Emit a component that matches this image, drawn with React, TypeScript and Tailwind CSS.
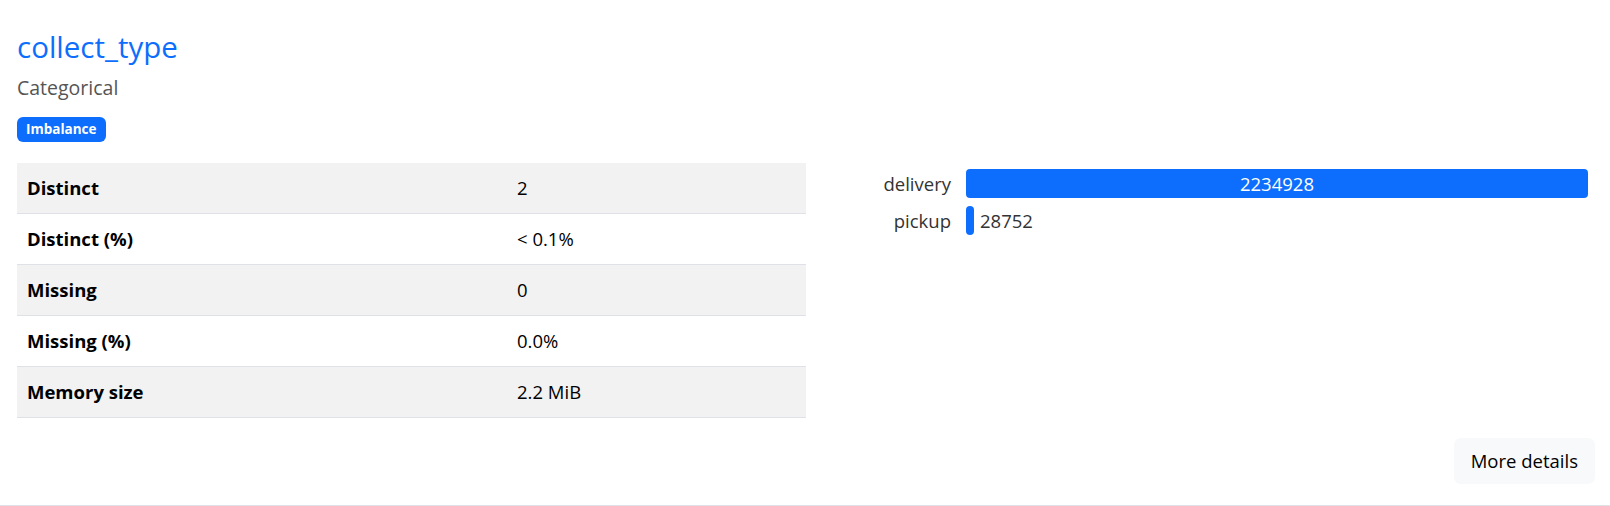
const stats = [
  { label: "Distinct", value: "2" },
  { label: "Distinct (%)", value: "< 0.1%" },
  { label: "Missing", value: "0" },
  { label: "Missing (%)", value: "0.0%" },
  { label: "Memory size", value: "2.2 MiB" },
];

const counts = [
  { label: "delivery", count: 2234928 },
  { label: "pickup", count: 28752 },
];

const BAR_MAX = 622;

export default function App() {
  const max = Math.max(...counts.map((c) => c.count));

  return (
    <div
      className="w-full bg-white text-[#212529] border-b border-[#dee2e6] pt-[30px] pb-[21px] pl-[17px] pr-[15px]"
      style={{ fontFamily: '"Open Sans", "Noto Sans", sans-serif' }}
    >
      <div className="text-[29.5px] leading-[34px] font-medium text-[#0d6efd]">collect_type</div>
      <div className="mt-[11px] text-[19.5px] leading-[26px] font-medium text-[#555]">Categorical</div>
      <div className="mt-[16px] flex">
        <span className="h-[25px] px-[9px] flex items-center rounded-[6px] bg-[#0d6efd] text-white text-[13.5px] font-bold">
          Imbalance
        </span>
      </div>

      <div className="mt-[21px] flex">
        <div className="w-[789px]">
          {stats.map((s, i) => (
            <div
              key={s.label}
              className={`grid grid-cols-[490px_1fr] h-[51px] items-center border-b border-[#dee2e6] text-[18.5px] ${
                i % 2 === 0 ? "bg-[#f2f2f2]" : "bg-white"
              }`}
            >
              <div className="pl-[10px] font-bold text-black">{s.label}</div>
              <div className="pl-[10px] text-black">{s.value}</div>
            </div>
          ))}
        </div>

        <div className="flex-1 pt-[6px] pr-[7px]">
          <div className="grid grid-cols-[145px_1fr] gap-x-[15px] gap-y-[8px] items-center text-[18.5px]">
            {counts.map((c) => {
              const w = Math.max(8, Math.round((c.count / max) * BAR_MAX));
              const full = c.count === max;
              return (
                <div key={c.label} className="contents">
                  <div className="text-right text-[#333]">{c.label}</div>
                  <div className="flex items-center h-[29px]">
                    <div
                      className="h-full rounded-[4px] bg-[#0d6efd] flex items-center justify-center text-white"
                      style={{ width: full ? "100%" : w }}
                    >
                      {full ? c.count : null}
                    </div>
                    {!full && <span className="ml-[6px] text-[#333]">{c.count}</span>}
                  </div>
                </div>
              );
            })}
          </div>
        </div>
      </div>

      <div className="mt-[20px] flex justify-end">
        <button className="h-[46px] px-[17px] rounded-[7px] bg-[#f8f9fa] text-black text-[18.5px]">
          More details
        </button>
      </div>
    </div>
  );
}
